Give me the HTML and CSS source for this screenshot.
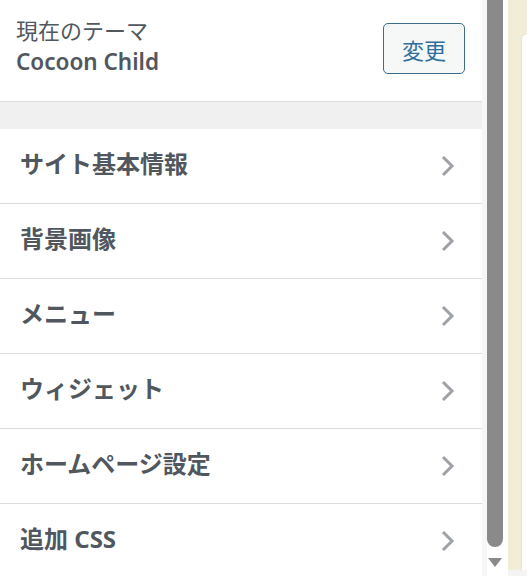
FILE: index.html
```html
<!DOCTYPE html>
<html lang="ja">
<head>
<meta charset="utf-8">
<title>カスタマイズ</title>
<link rel="stylesheet" href="styles.css">
</head>
<body>
<div class="frame">
  <div class="panel">
    <div class="theme-info">
      <div class="theme-text">
        <span class="theme-label">現在のテーマ</span>
        <span class="theme-name">Cocoon Child</span>
      </div>
      <button class="change-btn" type="button">変更</button>
    </div>
    <div class="spacer"></div>
    <ul class="sections">
      <li class="section"><span class="section-title">サイト基本情報</span><svg class="chev" viewBox="0 0 16 24" width="16" height="24"><path d="M3 3 L12 12 L3 21" fill="none" stroke="#9ea2a7" stroke-width="3"/></svg></li>
      <li class="section"><span class="section-title">背景画像</span><svg class="chev" viewBox="0 0 16 24" width="16" height="24"><path d="M3 3 L12 12 L3 21" fill="none" stroke="#9ea2a7" stroke-width="3"/></svg></li>
      <li class="section"><span class="section-title">メニュー</span><svg class="chev" viewBox="0 0 16 24" width="16" height="24"><path d="M3 3 L12 12 L3 21" fill="none" stroke="#9ea2a7" stroke-width="3"/></svg></li>
      <li class="section"><span class="section-title">ウィジェット</span><svg class="chev" viewBox="0 0 16 24" width="16" height="24"><path d="M3 3 L12 12 L3 21" fill="none" stroke="#9ea2a7" stroke-width="3"/></svg></li>
      <li class="section"><span class="section-title">ホームページ設定</span><svg class="chev" viewBox="0 0 16 24" width="16" height="24"><path d="M3 3 L12 12 L3 21" fill="none" stroke="#9ea2a7" stroke-width="3"/></svg></li>
      <li class="section"><span class="section-title">追加 CSS</span><svg class="chev" viewBox="0 0 16 24" width="16" height="24"><path d="M3 3 L12 12 L3 21" fill="none" stroke="#9ea2a7" stroke-width="3"/></svg></li>
    </ul>
  </div>
  <div class="gutter"></div>
  <div class="scrollbar">
    <div class="thumb"></div>
    <svg class="arrow" viewBox="0 0 14 10" width="14" height="10"><path d="M0 0 H14 L7 9 Z" fill="#8a8a8a"/></svg>
  </div>
  <div class="divider"></div>
  <div class="preview">
    <div class="preview-top">
      <div class="card"></div>
    </div>
    <div class="preview-bottom"></div>
  </div>
</div>
</body>
</html>
```

FILE: styles.css
```css
* { box-sizing: border-box; }
html, body { margin: 0; padding: 0; }
body {
  background: #ffffff;
  font-family: "Noto Sans", "Noto Sans CJK JP", sans-serif;
  color: #50575e;
}
.frame {
  display: flex;
  width: 527px;
  height: 576px;
  overflow: hidden;
}
.panel {
  width: 482px;
  flex: none;
  background: #ffffff;
  display: flex;
  flex-direction: column;
}
.theme-info {
  height: 102px;
  flex: none;
  border-bottom: 1px solid #dcdcde;
  display: flex;
  align-items: flex-start;
  justify-content: space-between;
  padding: 14px 17px 0 16px;
}
.theme-text {
  display: flex;
  flex-direction: column;
}
.theme-label {
  font-size: 22px;
  line-height: 32px;
  font-weight: 400;
  color: #50575e;
}
.theme-name {
  font-size: 22.5px;
  line-height: 32px;
  font-weight: 600;
  color: #50575e;
}
.change-btn {
  margin-top: 9px;
  width: 82px;
  height: 51px;
  border: 1px solid #3d6d8c;
  border-radius: 5px;
  background: #f6f7f7;
  color: #2f6f9e;
  font-family: "Noto Sans CJK JP", sans-serif;
  font-size: 22px;
  padding: 0;
}
.spacer {
  height: 27px;
  flex: none;
  background: #f0f0f1;
}
.sections {
  list-style: none;
  margin: 0;
  padding: 0;
}
.section {
  height: 75px;
  border-bottom: 1px solid #dcdcde;
  display: flex;
  align-items: center;
  justify-content: space-between;
  padding: 0 26px 0 20px;
}
.section-title {
  font-size: 24px;
  line-height: 30px;
  padding-bottom: 4px;
  font-weight: 700;
  color: #50575e;
  font-family: "Noto Sans", "Noto Sans CJK JP", sans-serif;
}
.chev { flex: none; }
.gutter {
  width: 5px;
  flex: none;
  background: #f7f7f7;
}
.scrollbar {
  width: 16px;
  flex: none;
  display: flex;
  flex-direction: column;
  align-items: center;
}
.thumb {
  width: 16px;
  height: 547px;
  background: #8a8a8a;
  border-radius: 0 0 8px 8px;
}
.arrow {
  margin-top: 11px;
}
.divider {
  width: 5px;
  flex: none;
  background: #ffffff;
}
.preview {
  flex: 1;
  display: flex;
  flex-direction: column;
}
.preview-top {
  height: 570px;
  background: #f1edd6;
  padding: 33px 0 0 13px;
}
.card {
  height: 537px;
  background: #ffffff;
  border-radius: 8px 0 0 0;
  border-left: 1px solid #e6e2cc;
  border-top: 1px solid #e6e2cc;
}
.preview-bottom {
  flex: 1;
  background: #f4f4f4;
}
```
